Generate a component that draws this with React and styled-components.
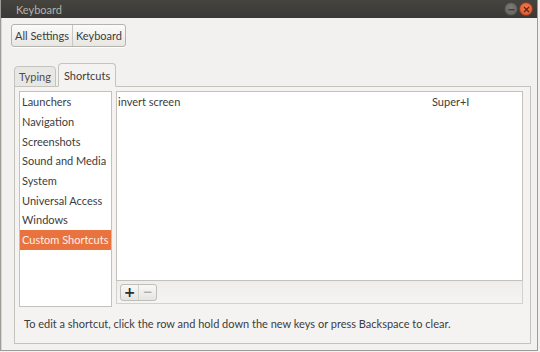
import styled, { createGlobalStyle } from "styled-components";

const Global = createGlobalStyle`
  html, body {
    margin: 0;
    padding: 0;
    background: #f2f1f0;
  }
  body {
    font-family: Lato, "Open Sans", sans-serif;
    font-size: 11px;
    color: #3c3c3c;
  }
`;

const categories = [
  "Launchers",
  "Navigation",
  "Screenshots",
  "Sound and Media",
  "System",
  "Universal Access",
  "Windows",
  "Custom Shortcuts",
];

export default function App() {
  return (
    <>
      <Global />
      <Window>
        <TitleBar>
          <Title>Keyboard</Title>
          <WinButtons>
            <WinButton kind="min">
              <svg width="7" height="7" viewBox="0 0 7 7">
                <rect x="0.5" y="3" width="6" height="1.4" fill="#3c3b37" />
              </svg>
            </WinButton>
            <WinButton kind="close">
              <svg width="7" height="7" viewBox="0 0 7 7">
                <path d="M1 1 L6 6 M6 1 L1 6" stroke="#5a2414" strokeWidth="1.3" />
              </svg>
            </WinButton>
          </WinButtons>
        </TitleBar>

        <Body>
          <Crumbs>
            <Crumb>All Settings</Crumb>
            <Crumb>Keyboard</Crumb>
          </Crumbs>

          <Tabs>
            <Tab>Typing</Tab>
            <Tab active>Shortcuts</Tab>
          </Tabs>

          <Notebook>
            <Panes>
              <SideList>
                {categories.map((c) => (
                  <SideItem key={c} selected={c === "Custom Shortcuts"}>
                    {c}
                  </SideItem>
                ))}
              </SideList>
              <MainCol>
                <ShortcutList>
                  <ShortcutRow>
                    <span>invert screen</span>
                    <Accel>Super+I</Accel>
                  </ShortcutRow>
                </ShortcutList>
                <Toolbar>
                  <ToolGroup>
                    <ToolButton>+</ToolButton>
                    <ToolButton disabled>−</ToolButton>
                  </ToolGroup>
                </Toolbar>
              </MainCol>
            </Panes>
            <Hint>
              To edit a shortcut, click the row and hold down the new keys or press
              Backspace to clear.
            </Hint>
          </Notebook>
        </Body>
      </Window>
    </>
  );
}

const Window = styled.div`
  width: 536px;
  height: 350px;
  border: 1px solid #9e9c98;
  border-top: none;
  display: flex;
  flex-direction: column;
  background: #f2f1f0;
`;

const TitleBar = styled.div`
  height: 18px;
  flex: none;
  background: linear-gradient(#45443f, #3a3935);
  display: flex;
  align-items: center;
  justify-content: space-between;
  padding: 0 4px 0 15px;
`;

const Title = styled.span`
  color: #b3b1aa;
  font-size: 11px;
`;

const WinButtons = styled.div`
  display: flex;
  gap: 1px;
  align-items: center;
`;

const WinButton = styled.div`
  width: 12px;
  height: 12px;
  border-radius: 50%;
  display: flex;
  align-items: center;
  justify-content: center;
  background: ${(p) =>
    p.kind === "close"
      ? "radial-gradient(circle at 50% 40%, #f47d4e, #d4512a)"
      : "radial-gradient(circle at 50% 40%, #7d7c78, #5d5c58)"};
  border: 1px solid ${(p) => (p.kind === "close" ? "#8f3a1f" : "#46453f")};
`;

const Body = styled.div`
  flex: 1;
  display: flex;
  flex-direction: column;
  padding: 6px 6px 6px 12px;
  border-left: 1px solid #d8d6d2;
`;

const Crumbs = styled.div`
  display: flex;
  align-self: flex-start;
  margin-left: -3px;
  border: 1px solid #b5b3ae;
  border-radius: 3px;
  background: linear-gradient(#fbfbfa, #e8e6e3);
  box-shadow: 0 1px 0 #fff;
  height: 21px;
`;

const Crumb = styled.div`
  display: flex;
  align-items: center;
  padding: 0 3px;
  font-size: 11px;
  & + & {
    border-left: 1px solid #c9c7c3;
  }
`;

const Tabs = styled.div`
  display: flex;
  align-items: flex-end;
  margin-top: 16px;
  gap: 2px;
  height: 24px;
  position: relative;
  z-index: 1;
  margin-bottom: -1px;
`;

const Tab = styled.div`
  height: ${(p) => (p.active ? "24px" : "21px")};
  padding: 0 ${(p) => (p.active ? "5px" : "4px")};
  display: flex;
  align-items: center;
  box-sizing: border-box;
  border: 1px solid #c5c3be;
  border-bottom: ${(p) => (p.active ? "1px solid #f4f3f2" : "1px solid #c5c3be")};
  border-radius: 4px 4px 0 0;
  background: ${(p) => (p.active ? "#f4f3f2" : "#e9e7e4")};
  color: ${(p) => (p.active ? "#3c3c3c" : "#4c4c4c")};
  font-size: 11px;
`;

const Notebook = styled.div`
  flex: 1;
  border: 1px solid #c5c3be;
  background: #f4f3f2;
  display: flex;
  flex-direction: column;
  padding: 4px 7px 0 4px;
`;

const Panes = styled.div`
  display: flex;
  gap: 4px;
  height: 216px;
`;

const SideList = styled.div`
  width: 91px;
  flex: none;
  background: #fff;
  border: 1px solid #c3c1bc;
  display: flex;
  flex-direction: column;
`;

const SideItem = styled.div`
  height: 19.7px;
  display: flex;
  align-items: center;
  padding-left: 2px;
  font-size: 11px;
  white-space: nowrap;
  background: ${(p) => (p.selected ? "#e9733f" : "transparent")};
  color: ${(p) => (p.selected ? "#fdf0e8" : "#3c3c3c")};
`;

const MainCol = styled.div`
  flex: 1;
  display: flex;
  flex-direction: column;
  height: 213px;
`;

const ShortcutList = styled.div`
  flex: 1;
  background: #fff;
  border: 1px solid #c3c1bc;
`;

const ShortcutRow = styled.div`
  height: 19px;
  display: flex;
  align-items: center;
  padding-left: 1px;
  font-size: 11px;
  & > span:first-child {
    width: 314px;
  }
`;

const Accel = styled.span`
  color: #3c3c3c;
`;

const Toolbar = styled.div`
  height: 22px;
  flex: none;
  border: 1px solid #d3d1cd;
  border-top: none;
  background: linear-gradient(#eeedeb, #f5f4f3);
  display: flex;
  align-items: center;
  padding-left: 3px;
`;

const ToolGroup = styled.div`
  display: flex;
  border: 1px solid #c0beb9;
  border-radius: 3px;
  background: linear-gradient(#f8f8f7, #e6e4e1);
  height: 15px;
`;

const ToolButton = styled.div`
  width: 17px;
  display: flex;
  align-items: center;
  justify-content: center;
  font-family: "DejaVu Sans", sans-serif;
  font-size: ${(p) => (p.disabled ? "12px" : "14px")};
  font-weight: bold;
  line-height: 1;
  color: ${(p) => (p.disabled ? "#b0aea9" : "#2e2e2e")};
  & + & {
    border-left: 1px solid #d6d4d0;
  }
`;

const Hint = styled.div`
  padding: 10px 0 0 5px;
  font-size: 11px;
  color: #3c3c3c;
`;
